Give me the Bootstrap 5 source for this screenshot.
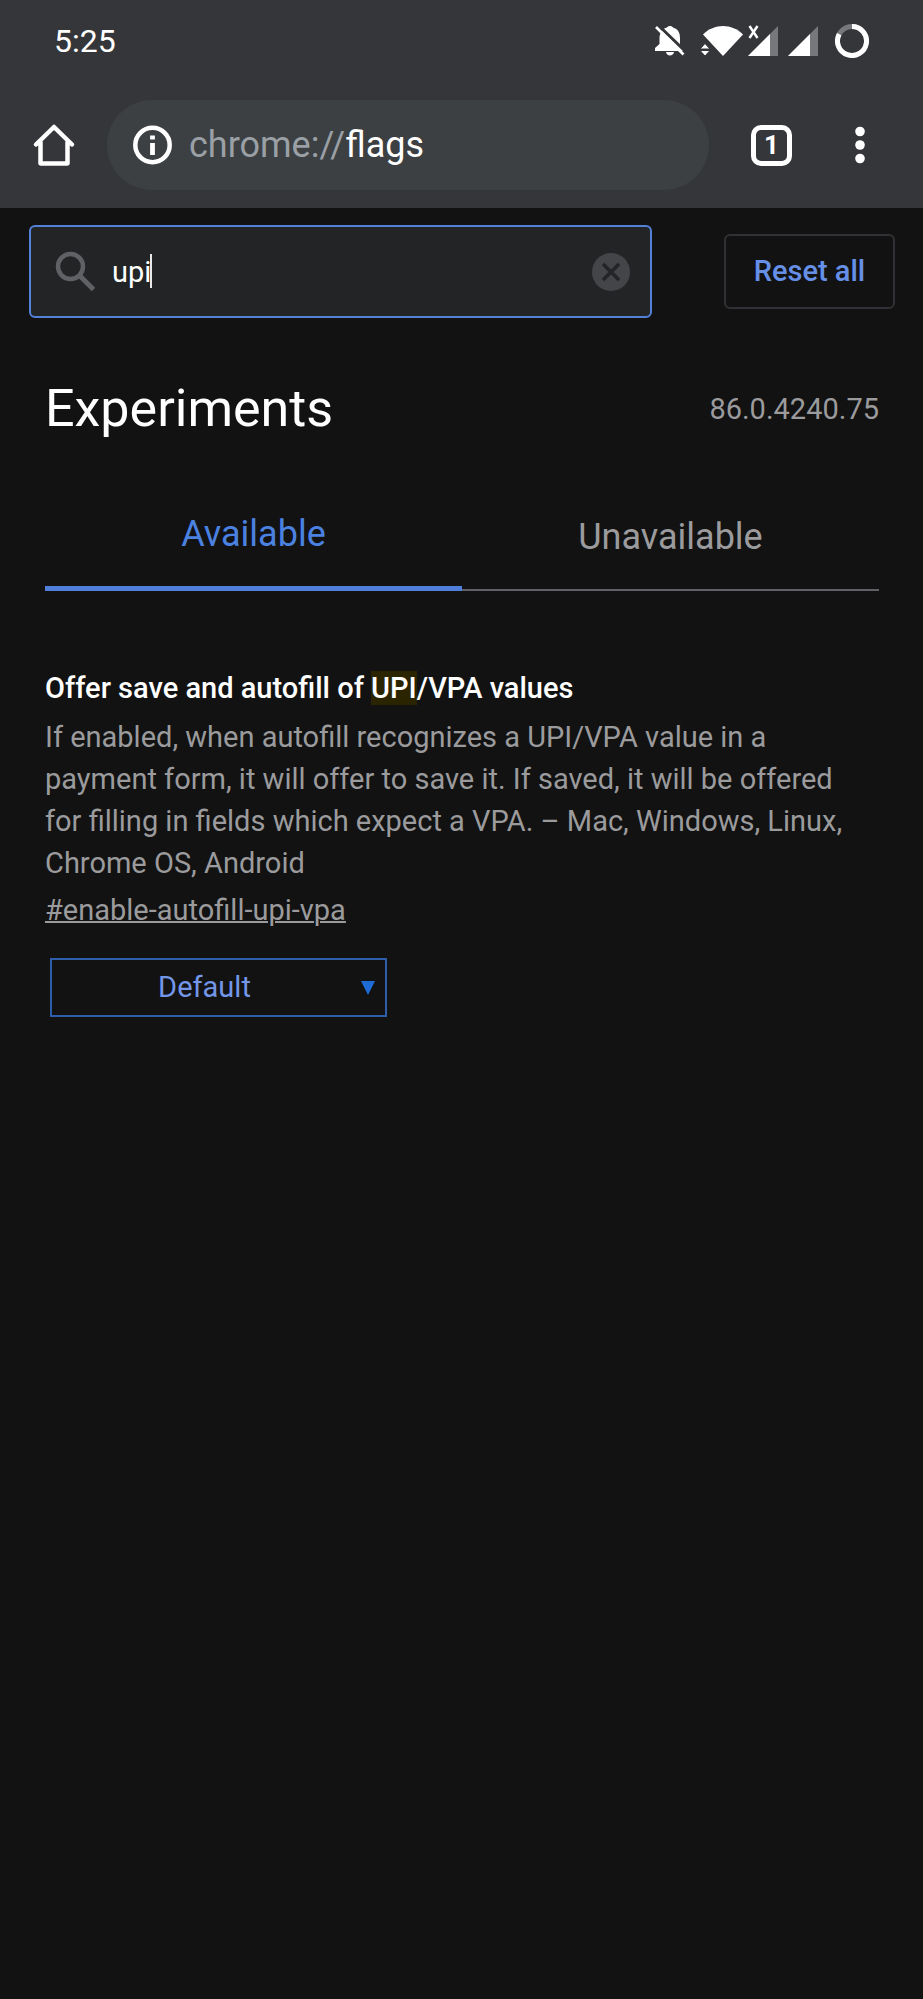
<!DOCTYPE html>
<html lang="en">
<head>
<meta charset="utf-8">
<meta name="viewport" content="width=device-width, initial-scale=1">
<title>Experiments</title>
<link href="https://cdn.jsdelivr.net/npm/bootstrap@5.3.0/dist/css/bootstrap.min.css" rel="stylesheet">
<style>
  body { background: #121212; color: #fff; font-family: Roboto, "Liberation Sans", sans-serif; font-size: 29px; line-height: 42px; }
  svg { display: block; flex: none; }
  .browser-bar { background: #35363a; }
  .status-row { height: 82px; padding: 0 54px; font-size: 32px; }
  .tool-row { padding: 18px 43px 18px 28px; height: 126px; }
  .icon-btn { background: none; border: 0; padding: 0; color: #fff; }
  .omnibox { background: #3c4043; border-radius: 45px; height: 90px; padding: 0 26px; margin-left: 27px; margin-right: 42px; font-size: 36px; line-height: 46px; color: #9aa0a6; }
  .omnibox b { font-weight: 400; color: #fff; }
  .tab-count { width: 41px; height: 41px; border: 5px solid #fff; border-radius: 10px; font-size: 26px; font-weight: 700; line-height: 31px; }
  .search-row { padding: 17px 28px 20px 29px; gap: 72px; }
  .search-box { height: 93px; }
  .search-box input, .search-box input:focus { height: 100%; background: #222425; color: #fff; border: 2px solid #5381d8; border-radius: 6px; font-size: 29px; padding: 0 80px 0 81px; box-shadow: none; caret-color: transparent; }
  .search-box .glass { position: absolute; left: 26px; top: 26px; color: #5f6165; pointer-events: none; }
  .search-box .caret { position: absolute; left: 121px; top: 29px; width: 2px; height: 34px; background: #e8e8e8; }
  .search-box .icon-btn { position: absolute; right: 22px; top: 28px; }
  .reset-btn, .reset-btn:hover { height: 75px; width: 171px; border: 2px solid #303134; border-radius: 6px; color: #6690e8; font-size: 29px; font-weight: 500; padding: 0; white-space: nowrap; }
  main { padding: 41px 44px 0 45px; }
  h1 { font-size: 52px; line-height: 60px; font-weight: 400; }
  .version, .about, .perma { color: #9b9b9d; }
  .flag-tabs { margin-top: 43px; }
  .flag-tabs button { flex: 1; background: none; border: 0; border-bottom: 2px solid #606164; padding: 34px 0 31px; color: #9b9b9d; font-size: 36px; line-height: 42px; }
  .flag-tabs button.active { color: #4b81e0; border-bottom: 5px solid #4f7fda; padding-top: 31px; }
  .flag-item { margin-top: 76px; padding-right: 12px; }
  h2 { font-size: 29px; line-height: 42px; font-weight: 500; margin-bottom: 7px; }
  h2 mark { background: #2b2400; color: #fff; padding: 0; }
  .about { margin-bottom: 5px; }
  .perma { text-decoration-thickness: 2px; }
  .choice { position: relative; width: 337px; height: 59px; margin: 27px 0 0 5px; }
  .choice select { appearance: none; width: 100%; height: 100%; background: transparent; border: 2px solid #2e5ea9; border-radius: 0; color: #7396e8; font-size: 29px; padding: 0 32px 2px 4px; text-align: center; text-align-last: center; }
  .choice svg { position: absolute; right: 12px; top: 23px; pointer-events: none; }
</style>
</head>
<body>
<header class="browser-bar">
  <div class="status-row d-flex align-items-center justify-content-between">
    <span>5:25</span>
    <div class="d-flex align-items-center">
      <svg class="me-3" width="30" height="32" viewBox="0 0 30 32" fill="#fff">
        <path d="M7 5.500C9 3 11 3 12 2.600C12.500.5 17.500.5 18 2.600C23 4 25 8 25 13V20L29.500 24.500V26H0V23L4.500 19V13C4.500 10 5.500 7.500 7 5.500ZM11 27H19C18.500 31.500 11.500 31.500 11 27Z"/>
        <path d="M2 -1L31 27" stroke="#35363a" stroke-width="3"/>
        <path d="M1 2L28.500 29.500" stroke="#fff" stroke-width="2.600"/>
      </svg>
      <svg width="42" height="32" viewBox="0 0 42 32" fill="#fff">
        <path d="M2 9.500C13-2 31-2 42 9.500L22 31Z"/>
        <path d="M4 18.500L9 24H-1ZM-1 25.500H9L4 31Z" stroke="#35363a" stroke-width="1"/>
      </svg>
      <svg class="ms-1" width="32" height="32" viewBox="0 0 32 32" fill="#fff">
        <path d="M31 1V31H1Z" fill="#77787b"/><path d="M23 9V31H1Z"/>
        <path d="M2.500 1L10.500 13M10.500 1L2.500 13" stroke="#fff" stroke-width="2.400"/>
      </svg>
      <svg class="ms-2" width="32" height="32" viewBox="0 0 32 32" fill="#fff">
        <path d="M31 1V31H1Z" fill="#77787b"/><path d="M23 9V31H1Z"/>
      </svg>
      <svg class="ms-3" width="34" height="34" viewBox="0 0 34 34" fill="none" stroke-width="5">
        <circle cx="17" cy="17" r="14.500" stroke="#77787b"/>
        <path d="M17 2.500A14.500 14.500 0 1 1 4.200 10.200" stroke="#fff"/>
      </svg>
    </div>
  </div>
  <div class="tool-row d-flex align-items-center">
    <button class="icon-btn" aria-label="Home">
      <svg width="52" height="44" viewBox="0 0 52 44" fill="none" stroke="#fff" stroke-width="4.500" stroke-linecap="round" stroke-linejoin="round">
        <path d="M8 21.500L26 4L44 21.500M12.500 19V40Q12.500 40.500 13 40.500H39Q39.500 40.500 39.500 40V19"/>
      </svg>
    </button>
    <div class="omnibox d-flex align-items-center flex-grow-1">
      <svg class="me-3" width="40" height="40" viewBox="0 0 40 40" fill="none" stroke="#fff">
        <circle cx="19.500" cy="20" r="17.200" stroke-width="4.500"/>
        <path d="M19.500 10.500V14.500M19.500 18V30" stroke-width="4.800"/>
      </svg>
      <span>chrome://<b>flags</b></span>
    </div>
    <button class="icon-btn tab-count" aria-label="1 open tab">1</button>
    <button class="icon-btn ms-5" aria-label="Menu">
      <svg width="40" height="40" viewBox="0 0 40 40" fill="#fff"><circle cx="20" cy="6.500" r="4.800"/><circle cx="20" cy="20" r="4.800"/><circle cx="20" cy="33.500" r="4.800"/></svg>
    </button>
  </div>
</header>

<div class="search-row d-flex align-items-center">
  <div class="search-box position-relative flex-grow-1">
    <input class="form-control" type="text" value="upi" aria-label="Search flags">
    <svg class="glass" width="42" height="42" viewBox="0 0 42 42" fill="none" stroke="currentColor">
      <circle cx="15.500" cy="15.500" r="12.500" stroke-width="4.500"/><path d="M25 25L38.500 38.500" stroke-width="5"/>
    </svg>
    <span class="caret"></span>
    <button class="icon-btn" aria-label="Clear search">
      <svg width="38" height="38" viewBox="0 0 38 38"><circle cx="19" cy="19" r="19" fill="#434548"/><path d="M11 11L27 27M27 11L11 27" stroke="#222425" stroke-width="3.600"/></svg>
    </button>
  </div>
  <button class="btn reset-btn">Reset all</button>
</div>

<main>
  <div class="d-flex align-items-center justify-content-between">
    <h1 class="mb-0">Experiments</h1>
    <span class="version">86.0.4240.75</span>
  </div>
  <div class="flag-tabs d-flex" role="tablist">
    <button class="active" role="tab" aria-selected="true">Available</button>
    <button role="tab" aria-selected="false">Unavailable</button>
  </div>
  <section class="flag-item">
    <h2 id="flag-name">Offer save and autofill of <mark>UPI</mark>/VPA values</h2>
    <p class="about">If enabled, when autofill recognizes a UPI/VPA value in a payment form, it will offer to save it. If saved, it will be offered for filling in fields which expect a VPA. – Mac, Windows, Linux, Chrome OS, Android</p>
    <a class="perma" href="#enable-autofill-upi-vpa">#enable-autofill-upi-vpa</a>
    <div class="choice">
      <select aria-labelledby="flag-name"><option>Default</option><option>Enabled</option><option>Disabled</option></select>
      <svg width="14" height="14" viewBox="0 0 14 14"><path d="M0 0H14L7 14Z" fill="#1f6bd6"/></svg>
    </div>
  </section>
</main>
<script src="https://cdn.jsdelivr.net/npm/bootstrap@5.3.0/dist/js/bootstrap.bundle.min.js"></script>
</body>
</html>
